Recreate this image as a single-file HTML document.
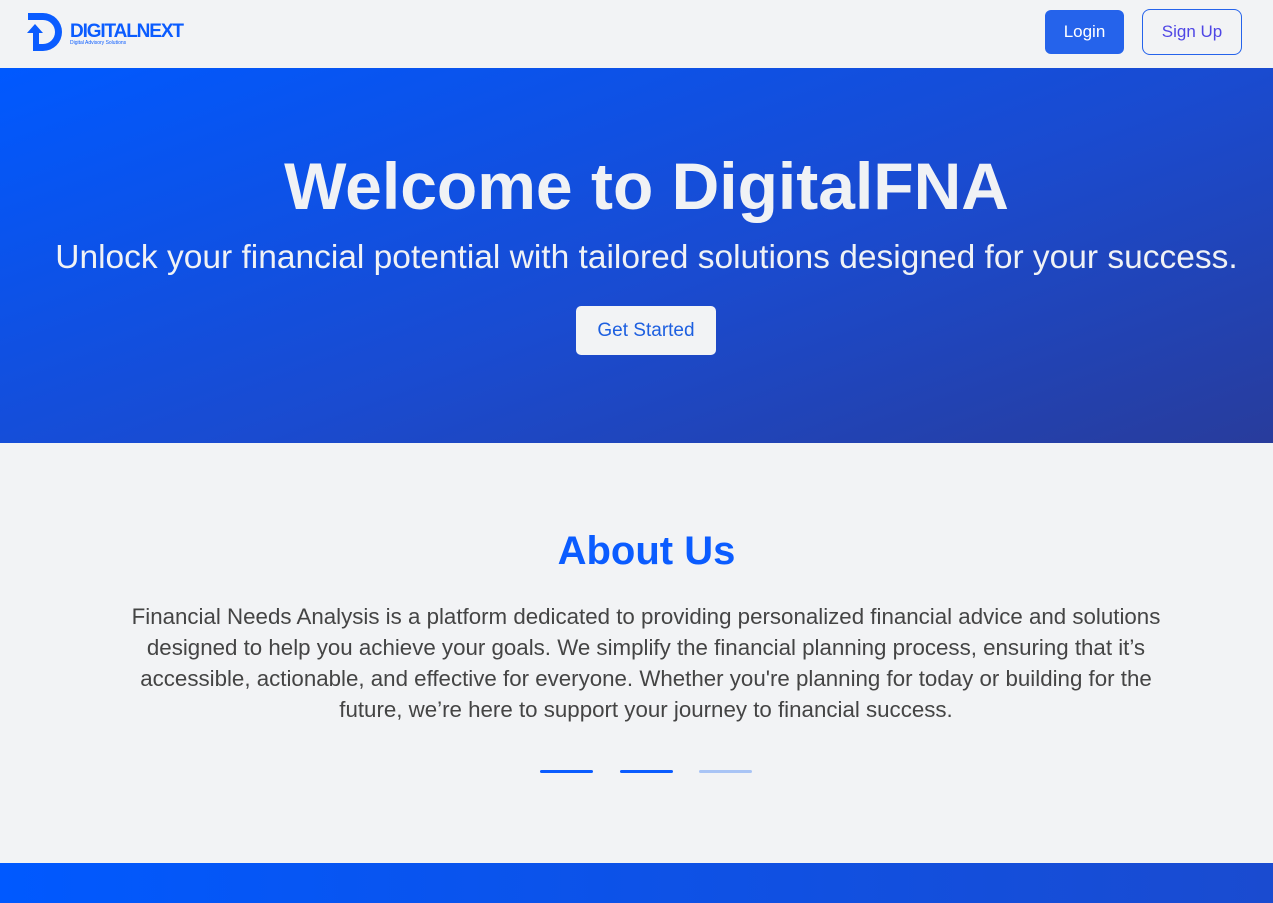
<!DOCTYPE html>
<html><head><style>
*{margin:0;padding:0;box-sizing:border-box}
body{width:1273px;height:903px;overflow:hidden;background:#f2f3f5;font-family:"Liberation Sans",sans-serif}
.nav{height:68px;position:relative;background:#f2f3f5}
.logo{position:absolute;left:24px;top:12px}
.login{position:absolute;left:1045px;top:10px;width:79px;height:44px;background:#2563eb;color:#fff;border-radius:6px;font-size:17px;text-align:center;line-height:44px}
.signup{position:absolute;left:1142px;top:9px;width:100px;height:46px;border:1px solid #2563eb;color:#4f46e5;border-radius:8px;font-size:17px;text-align:center;line-height:44px}
.hero{position:absolute;top:68px;left:0;width:1273px;height:375px;background:linear-gradient(160deg,#0059ff 0%,#1a4bd0 55%,#283c9c 100%);color:#f0f2f5;text-align:center}
.hero h1{position:absolute;top:80px;left:20px;width:1253px;font-size:66px;font-weight:bold}
.hero p{position:absolute;top:171px;left:20px;width:1253px;font-size:33.5px}
.btn{position:absolute;left:576px;top:238px;width:140px;height:49px;background:#f2f3f5;color:#1d5fe0;border-radius:5px;font-size:19px;line-height:49px}
.about{position:absolute;top:443px;left:0;width:100%;text-align:center}
.about h2{position:absolute;top:86px;left:20px;width:1253px;color:#0b5cff;font-size:40px;font-weight:bold}
.about p{position:absolute;top:158px;left:120px;width:1052px;color:#444;font-size:22.3px;line-height:31px}
.dash{position:absolute;top:770px;width:53px;height:3px;border-radius:2px}
.foot{position:absolute;top:863px;left:0;width:1273px;height:40px;background:linear-gradient(90deg,#0059ff,#1a4bd0)}
</style></head><body>
<div class="nav">
<svg class="logo" width="170" height="42" viewBox="0 0 170 42">
<path d="M4 1h15a19 19 0 0 1 0 38H9V21H3l8-9 8 9h-4v11h4a12 12 0 0 0 0-24H4z" fill="#0b5cff"/>
<text x="46" y="25" font-family="Liberation Sans" font-weight="bold" font-size="19" fill="#0b5cff" textLength="114">DIGITALNEXT</text>
<text x="46" y="32" font-family="Liberation Sans" font-size="5" fill="#0b5cff">Digital Advisory Solutions</text>
</svg>
<div class="login">Login</div>
<div class="signup">Sign Up</div>
</div>
<div class="hero">
<h1>Welcome to DigitalFNA</h1>
<p>Unlock your financial potential with tailored solutions designed for your success.</p>
<div class="btn">Get Started</div>
</div>
<div class="about">
<h2>About Us</h2>
<p>Financial Needs Analysis is a platform dedicated to providing personalized financial advice and solutions designed to help you achieve your goals. We simplify the financial planning process, ensuring that it’s accessible, actionable, and effective for everyone. Whether you're planning for today or building for the future, we’re here to support your journey to financial success.</p>
</div>
<div class="dash" style="left:540px;background:#0b5cff"></div>
<div class="dash" style="left:620px;background:#0b5cff"></div>
<div class="dash" style="left:699px;background:#a9c4f5"></div>
<div class="foot"></div>
</body></html>
